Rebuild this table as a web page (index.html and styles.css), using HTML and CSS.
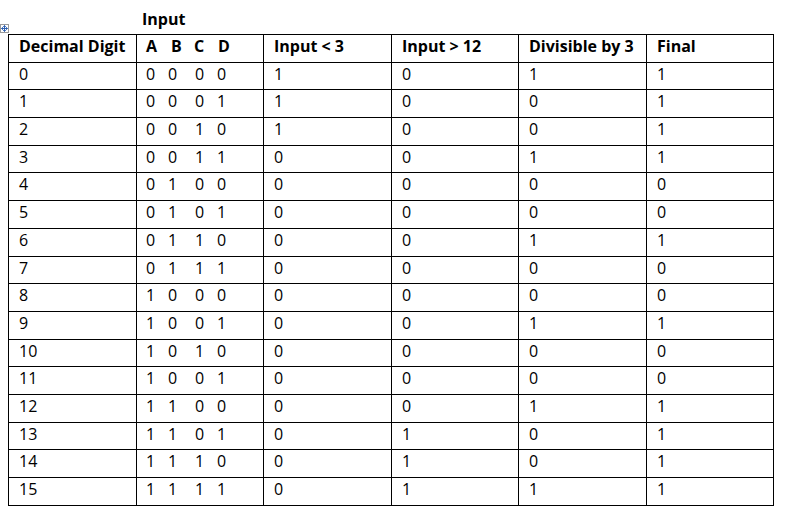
FILE: index.html
```html
<!DOCTYPE html>
<html lang="en">
<head>
<meta charset="utf-8">
<title>Truth table</title>
<link rel="stylesheet" href="styles.css">
</head>
<body>
<div class="page">
  <div class="caption"><span class="caption-text">Input</span></div>
  <div class="table-wrap">
    <span class="move-handle" aria-hidden="true">
      <svg width="9" height="9" viewBox="0 0 9 9">
        <rect x="0.5" y="0.5" width="8" height="8" fill="#fff" stroke="#9a9a9a"/>
        <path d="M4.5 1.5v6M1.5 4.5h6" stroke="#2a5db0" stroke-width="1"/>
        <path d="M4.5 1.5l-1.3 1.3M4.5 1.5l1.3 1.3M4.5 7.5l-1.3-1.3M4.5 7.5l1.3-1.3M1.5 4.5l1.3-1.3M1.5 4.5l1.3 1.3M7.5 4.5l-1.3-1.3M7.5 4.5l-1.3 1.3" stroke="#2a5db0" stroke-width="1" fill="none"/>
      </svg>
    </span>
    <table class="truth">
      <colgroup>
        <col class="c1"><col class="c2"><col class="c3"><col class="c4"><col class="c5"><col class="c6">
      </colgroup>
      <thead>
        <tr>
          <th>Decimal Digit</th>
          <th><span class="bits head"><span>A</span><span>B</span><span>C</span><span>D</span></span></th>
          <th>Input &lt; 3</th>
          <th>Input &gt; 12</th>
          <th>Divisible by 3</th>
          <th>Final</th>
        </tr>
      </thead>
      <tbody>
        <tr><td>0</td><td><span class="bits"><span>0</span><span>0</span><span>0</span><span>0</span></span></td><td>1</td><td>0</td><td>1</td><td>1</td></tr>
        <tr><td>1</td><td><span class="bits"><span>0</span><span>0</span><span>0</span><span>1</span></span></td><td>1</td><td>0</td><td>0</td><td>1</td></tr>
        <tr><td>2</td><td><span class="bits"><span>0</span><span>0</span><span>1</span><span>0</span></span></td><td>1</td><td>0</td><td>0</td><td>1</td></tr>
        <tr><td>3</td><td><span class="bits"><span>0</span><span>0</span><span>1</span><span>1</span></span></td><td>0</td><td>0</td><td>1</td><td>1</td></tr>
        <tr><td>4</td><td><span class="bits"><span>0</span><span>1</span><span>0</span><span>0</span></span></td><td>0</td><td>0</td><td>0</td><td>0</td></tr>
        <tr><td>5</td><td><span class="bits"><span>0</span><span>1</span><span>0</span><span>1</span></span></td><td>0</td><td>0</td><td>0</td><td>0</td></tr>
        <tr><td>6</td><td><span class="bits"><span>0</span><span>1</span><span>1</span><span>0</span></span></td><td>0</td><td>0</td><td>1</td><td>1</td></tr>
        <tr><td>7</td><td><span class="bits"><span>0</span><span>1</span><span>1</span><span>1</span></span></td><td>0</td><td>0</td><td>0</td><td>0</td></tr>
        <tr><td>8</td><td><span class="bits"><span>1</span><span>0</span><span>0</span><span>0</span></span></td><td>0</td><td>0</td><td>0</td><td>0</td></tr>
        <tr><td>9</td><td><span class="bits"><span>1</span><span>0</span><span>0</span><span>1</span></span></td><td>0</td><td>0</td><td>1</td><td>1</td></tr>
        <tr><td>10</td><td><span class="bits"><span>1</span><span>0</span><span>1</span><span>0</span></span></td><td>0</td><td>0</td><td>0</td><td>0</td></tr>
        <tr><td>11</td><td><span class="bits"><span>1</span><span>0</span><span>0</span><span>1</span></span></td><td>0</td><td>0</td><td>0</td><td>0</td></tr>
        <tr><td>12</td><td><span class="bits"><span>1</span><span>1</span><span>0</span><span>0</span></span></td><td>0</td><td>0</td><td>1</td><td>1</td></tr>
        <tr><td>13</td><td><span class="bits"><span>1</span><span>1</span><span>0</span><span>1</span></span></td><td>0</td><td>1</td><td>0</td><td>1</td></tr>
        <tr><td>14</td><td><span class="bits"><span>1</span><span>1</span><span>1</span><span>0</span></span></td><td>0</td><td>1</td><td>0</td><td>1</td></tr>
        <tr><td>15</td><td><span class="bits"><span>1</span><span>1</span><span>1</span><span>1</span></span></td><td>0</td><td>1</td><td>1</td><td>1</td></tr>
      </tbody>
    </table>
    <span class="resize-handle" aria-hidden="true"></span>
  </div>
</div>
</body>
</html>
```
FILE: styles.css
```css
html, body {
  margin: 0;
  padding: 0;
  background: #ffffff;
}

body {
  font-family: "Open Sans", "Liberation Sans", sans-serif;
  font-size: 16px;
  color: #000000;
}

.page {
  padding: 0 0 0 8px;
}

.caption {
  height: 34px;
  box-sizing: border-box;
  padding: 9px 0 0 134px;
  font-weight: bold;
  line-height: 20px;
}

.table-wrap {
  position: relative;
  width: 766px;
}

.move-handle {
  position: absolute;
  left: -8px;
  top: -10px;
  width: 9px;
  height: 9px;
  line-height: 0;
}

.resize-handle {
  position: absolute;
  right: -5px;
  bottom: -6px;
  width: 4px;
  height: 4px;
  border: 1px solid #8a8a8a;
  background: #fff;
}

.truth {
  border-collapse: collapse;
  table-layout: fixed;
  width: 766px;
}

.c1, .c3, .c5 { width: 128px; }
.c2, .c4, .c6 { width: 127px; }

.truth th,
.truth td {
  border: 1px solid #000000;
  text-align: left;
  vertical-align: top;
  padding: 1px 0 0 10px;
  height: 25.7px;
  line-height: 20px;
  white-space: nowrap;
}

.truth th {
  font-weight: bold;
}

.bits {
  display: inline-flex;
  margin-left: -1px;
}

.bits span {
  display: inline-block;
}

.bits span:nth-child(1) { width: 22px; }
.bits span:nth-child(2) { width: 27px; }
.bits span:nth-child(3) { width: 22px; }

.bits.head span:nth-child(1) { width: 25px; }
.bits.head span:nth-child(2) { width: 23px; }
.bits.head span:nth-child(3) { width: 24px; }
```
